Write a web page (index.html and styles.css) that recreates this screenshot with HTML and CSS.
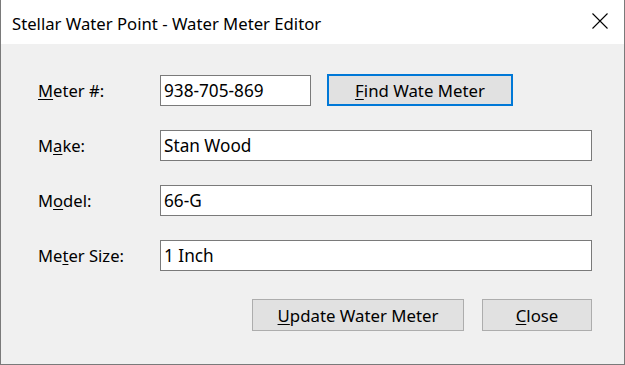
FILE: index.html
```html
<!DOCTYPE html>
<html lang="en">
<head>
    <meta charset="UTF-8">
    <meta name="viewport" content="width=device-width, initial-scale=1.0">
    <title>Water Meter Editor</title>
    <link rel="stylesheet" href="styles.css">
</head>
<body>
    <div class="window">
        <div class="titleBar">
            <span class="title">Stellar Water Point - Water Meter Editor</span>
            <span class="closeX">
                <svg width="16" height="16" viewBox="0 0 16 16">
                    <path d="M0.5 0.5 L15.5 15.5 M15.5 0.5 L0.5 15.5" stroke="#000" stroke-width="1.1" fill="none"/>
                </svg>
            </span>
        </div>
        <div class="content">
            <div class="form">
                <label class="lbl"><u>M</u>eter #:</label>
                <div class="firstRow">
                    <input class="txt short" type="text" value="938-705-869">
                    <button class="btn findBtn"><u>F</u>ind Wate Meter</button>
                </div>
                <label class="lbl">M<u>a</u>ke:</label>
                <input class="txt" type="text" value="Stan Wood">
                <label class="lbl">M<u>o</u>del:</label>
                <input class="txt" type="text" value="66-G">
                <label class="lbl">Me<u>t</u>er Size:</label>
                <input class="txt" type="text" value="1 Inch">
            </div>
            <div class="actions">
                <button class="btn updateBtn"><u>U</u>pdate Water Meter</button>
                <button class="btn closeBtn"><u>C</u>lose</button>
            </div>
        </div>
    </div>
</body>
</html>
```

FILE: styles.css
```css
body {
    margin: 0;
    font-family: "Noto Sans", "Open Sans", sans-serif;
    color: #000;
}
.window {
    width: 625px;
    height: 365px;
    box-sizing: border-box;
    border: 1px solid #7a7a7a;
    border-top: none;
    background-color: #f0f0f0;
}
.titleBar {
    height: 44px;
    background-color: #fff;
    display: flex;
    align-items: center;
    justify-content: space-between;
    padding: 0 16px 0 11px;
}
.title {
    font-size: 16.7px;
    margin-top: 2px;
}
.closeX {
    display: flex;
    margin-top: -2px;
}
.content {
    padding: 30px 32px 0 37px;
}
.form {
    display: grid;
    grid-template-columns: 122px 1fr;
    grid-auto-rows: 32px;
    row-gap: 23px;
    align-items: center;
}
.lbl {
    font-size: 16.6px;
}
.lbl u, .btn u {
    text-underline-offset: 2px;
}
.firstRow {
    display: flex;
    align-items: center;
    gap: 16px;
}
.txt {
    height: 31px;
    box-sizing: border-box;
    border: 1px solid #7a7a7a;
    background-color: #fff;
    font-family: inherit;
    font-size: 17.2px;
    padding: 0 3px;
    margin: 0;
    outline: none;
    color: #000;
}
.short {
    width: 151px;
}
.btn {
    height: 32px;
    box-sizing: border-box;
    border: 1px solid #adadad;
    background-color: #e1e1e1;
    font-family: inherit;
    font-size: 16.8px;
    color: #000;
    padding: 0;
    margin: 0;
}
.findBtn {
    width: 186px;
    border: 2px solid #0078d7;
}
.actions {
    display: flex;
    justify-content: flex-end;
    gap: 18px;
    margin-top: 28px;
}
.updateBtn {
    width: 212px;
}
.closeBtn {
    width: 110px;
}
```
